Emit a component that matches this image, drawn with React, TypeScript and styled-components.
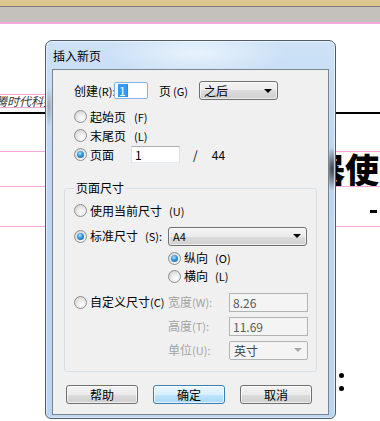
import styled, { createGlobalStyle } from 'styled-components';

const Global = createGlobalStyle`
  html, body { margin: 0; padding: 0; background: #fff; }
  body {
    font-family: "Noto Sans CJK SC", "Liberation Sans", sans-serif;
    font-size: 12px;
    color: #000;
  }
`;

const FONT = `"Noto Sans CJK SC", "Liberation Sans", sans-serif`;

const Screen = styled.div`
  position: relative;
  width: 380px;
  height: 421px;
  overflow: hidden;
  background: #fff;
`;

/* ---------- document behind the dialog ---------- */

const Doc = styled.div`
  display: flex;
  flex-direction: column;
`;

const TopBand = styled.div`
  height: 6px;
  background: #dcc590;
  border-bottom: 1px solid #7d7d7d;
`;

const GrayBand = styled.div`
  height: 15px;
  background: #c4c1bc;
  border-bottom: 2px solid #f4a9d9;
`;

const TextBox = styled.div`
  margin: 70px 0 0 -6px;
  width: 62px;
  height: 12px;
  border: 1px solid #f0a2d2;
  font-size: 12px;
  line-height: 12px;
  font-style: italic;
  color: #3a3a3a;
  white-space: nowrap;
`;

const Rule = styled.div<{ $gap: number }>`
  margin-top: ${({ $gap }) => $gap}px;
  height: 2px;
  background: #000;
`;

const PinkLine = styled.div<{ $gap?: number }>`
  margin-top: ${({ $gap }) => $gap ?? 0}px;
  height: 1px;
  background: #f6a8dc;
`;

const Heading = styled.div`
  height: 34px;
  padding-left: 311px;
  font-size: 34px;
  line-height: 34px;
  font-weight: 900;
  white-space: nowrap;
`;

const DashRow = styled.div`
  height: 39px;
  display: flex;
  align-items: flex-start;
`;

const Dash = styled.span`
  margin: 23px 0 0 370px;
  width: 7px;
  height: 3px;
  background: #000;
`;

const Bullets = styled.div`
  margin: 146px 0 0 339px;
  display: flex;
  flex-direction: column;
  gap: 8px;
`;

const Dot = styled.span`
  width: 5px;
  height: 5px;
  border-radius: 50%;
  background: #000;
`;

/* ---------- dialog ---------- */

const Dialog = styled.div`
  position: absolute;
  left: 45px;
  top: 40px;
  width: 291px;
  height: 379px;
  box-sizing: border-box;
  display: flex;
  flex-direction: column;
  padding: 0 6px 3px;
  border: 1px solid #4f5a66;
  border-radius: 7px 7px 6px 6px;
  background:
    radial-gradient(ellipse 6px 22px at 286px 128px, rgba(25, 25, 25, 0.8), rgba(25, 25, 25, 0)),
    radial-gradient(ellipse 4px 20px at 3px 66px, rgba(70, 70, 70, 0.35), rgba(70, 70, 70, 0)),
    radial-gradient(ellipse 90px 24px at 150px 12px, rgba(235, 244, 253, 0.9), rgba(235, 244, 253, 0)),
    linear-gradient(#cde2f7, #bfd7f1 30%, #bcd5f0);
  box-shadow: inset 0 0 0 1px rgba(255, 255, 255, 0.55);
`;

const TitleBar = styled.div`
  height: 28px;
  display: flex;
  align-items: center;
  padding-left: 1px;
  font-size: 12px;
  color: #000;
`;

const Client = styled.div`
  flex: 1;
  display: flex;
  flex-direction: column;
  padding: 11px 11px 0;
  background: #f0f0f0;
  border: 1px solid #7b8591;
`;

const Row = styled.div<{ $h?: number; $gap?: number; $indent?: number }>`
  display: flex;
  align-items: center;
  height: ${({ $h }) => $h ?? 19}px;
  margin-top: ${({ $gap }) => $gap ?? 0}px;
  padding-left: ${({ $indent }) => $indent ?? 0}px;
  white-space: nowrap;
`;

const Label = styled.span<{ $w?: number; $ml?: number; $muted?: boolean }>`
  flex: none;
  width: ${({ $w }) => ($w ? `${$w}px` : 'auto')};
  margin-left: ${({ $ml }) => $ml ?? 0}px;
  color: ${({ $muted }) => ($muted ? '#a3a3a3' : '#000')};
  line-height: 14px;
`;

const Key = styled.span<{ $ml?: number }>`
  margin-left: ${({ $ml }) => $ml ?? 0}px;
  font-size: 11px;
`;

const Radio = styled.span<{ $checked?: boolean }>`
  flex: none;
  width: 13px;
  height: 13px;
  box-sizing: border-box;
  margin-right: 3px;
  border-radius: 50%;
  border: 1px solid #8e8f8f;
  background: radial-gradient(circle at 62% 68%, #ffffff 0%, #ececec 40%, #cbcbcb 100%);
  display: inline-flex;
  align-items: center;
  justify-content: center;
  &::after {
    content: '';
    display: ${({ $checked }) => ($checked ? 'block' : 'none')};
    width: 7px;
    height: 7px;
    border-radius: 50%;
    background: radial-gradient(circle at 42% 35%, #b8e4ff 0%, #3b9be0 40%, #0c4f8f 100%);
  }
`;

const Field = styled.div<{ $w: number; $h?: number; $focus?: boolean; $disabled?: boolean; $ml?: number }>`
  flex: none;
  width: ${({ $w }) => $w}px;
  height: ${({ $h }) => $h ?? 17}px;
  margin-left: ${({ $ml }) => $ml ?? 0}px;
  box-sizing: border-box;
  display: flex;
  align-items: center;
  padding-left: 3px;
  border: 1px solid;
  border-radius: ${({ $focus }) => ($focus ? '2px' : '0')};
  border-color: ${({ $focus, $disabled }) =>
    $focus ? '#80b5e8' : $disabled ? '#b1b4b7' : '#abadb3 #dbdfe6 #e3e9ef #e2e3ea'};
  background: ${({ $disabled }) => ($disabled ? '#f4f4f4' : '#fff')};
  color: ${({ $disabled }) => ($disabled ? '#5a5a5a' : '#000')};
  font-size: 12px;
`;

const Selected = styled.span`
  background: #3399ff;
  color: #fff;
  padding: 0 1px;
  line-height: 13px;
  border-right: 1px solid #c0641c;
`;

const Combo = styled.div<{ $w: number; $disabled?: boolean; $ml?: number }>`
  flex: none;
  width: ${({ $w }) => $w}px;
  height: 19px;
  margin-left: ${({ $ml }) => $ml ?? 0}px;
  box-sizing: border-box;
  display: flex;
  align-items: center;
  justify-content: space-between;
  padding: 0 5px 0 4px;
  border: 1px solid ${({ $disabled }) => ($disabled ? '#b1b4b7' : '#707070')};
  border-radius: ${({ $disabled }) => ($disabled ? '2px' : '3px')};
  background: ${({ $disabled }) =>
    $disabled ? '#f4f4f4' : 'linear-gradient(#f3f3f3 0%, #ebebeb 50%, #dddddd 50%, #cfcfcf 100%)'};
  box-shadow: ${({ $disabled }) => ($disabled ? 'none' : 'inset 0 0 0 1px rgba(255,255,255,0.6)')};
  color: ${({ $disabled }) => ($disabled ? '#444' : '#000')};
`;

const Arrow = styled.span<{ $disabled?: boolean }>`
  width: 0;
  height: 0;
  border-left: 4px solid transparent;
  border-right: 4px solid transparent;
  border-top: 4px solid ${({ $disabled }) => ($disabled ? '#a8a8a8' : '#000')};
`;

const Group = styled.fieldset`
  margin: 17px 0 0;
  padding: 0 0 11px 9px;
  border: 1px solid #d5dfe5;
  border-radius: 3px;
  min-width: 0;
`;

const Legend = styled.legend`
  margin-left: 0;
  padding: 0 2px;
  font-size: 12px;
  line-height: 14px;
`;

const CustomGrid = styled.div`
  margin-top: 7px;
  display: grid;
  grid-template-columns: 94px 61px 79px;
  grid-auto-rows: 20px;
  row-gap: 4px;
  align-items: center;
  white-space: nowrap;
`;

const Cell = styled.div`
  display: flex;
  align-items: center;
`;

const Buttons = styled.div`
  margin: 13px 0 0 2px;
  display: flex;
  gap: 15px;
`;

const Btn = styled.button<{ $primary?: boolean }>`
  width: 72px;
  height: 19px;
  padding: 0;
  font-family: ${FONT};
  font-size: 12px;
  line-height: 15px;
  color: #000;
  border: 1px solid ${({ $primary }) => ($primary ? '#3c7fb1' : '#707070')};
  border-radius: 3px;
  background: ${({ $primary }) =>
    $primary
      ? 'linear-gradient(#eaf6fd 0%, #d9f0fc 50%, #bee6fd 50%, #a7d9f5 100%)'
      : 'linear-gradient(#f3f3f3 0%, #ebebeb 50%, #dddddd 50%, #cfcfcf 100%)'};
  box-shadow: inset 0 0 0 1px rgba(255, 255, 255, 0.65);
`;

export default function App() {
  return (
    <Screen>
      <Global />
      <Doc>
        <TopBand />
        <GrayBand />
        <TextBox>腾时代科技</TextBox>
        <Rule $gap={4} />
        <PinkLine $gap={37} />
        <Heading>器使</Heading>
        <PinkLine />
        <DashRow>
          <Dash />
        </DashRow>
        <PinkLine />
        <Bullets>
          <Dot />
          <Dot />
        </Bullets>
      </Doc>

      <Dialog>
        <TitleBar>插入新页</TitleBar>
        <Client>
          <Row $indent={10}>
            <Label $w={40}>
              创建<Key>(R):</Key>
            </Label>
            <Field $w={34} $focus>
              <Selected>1</Selected>
            </Field>
            <Label $w={40} $ml={11}>
              页<Key $ml={2}>(G)</Key>
            </Label>
            <Combo $w={79}>
              之后
              <Arrow />
            </Combo>
          </Row>

          <Row $indent={10} $gap={7}>
            <Radio />
            <Label>
              起始页<Key $ml={8}>(F)</Key>
            </Label>
          </Row>
          <Row $indent={10}>
            <Radio />
            <Label>
              末尾页<Key $ml={8}>(L)</Key>
            </Label>
          </Row>
          <Row $indent={10}>
            <Radio $checked />
            <Label>页面</Label>
            <Field $w={49} $ml={17}>
              1
            </Field>
            <Label $ml={13}>/</Label>
            <Label $ml={14}>44</Label>
          </Row>

          <Group>
            <Legend>页面尺寸</Legend>
            <Row $gap={6}>
              <Radio />
              <Label>
                使用当前尺寸<Key $ml={7}>(U)</Key>
              </Label>
            </Row>
            <Row $gap={6} $h={20}>
              <Radio $checked />
              <Label $w={78}>
                标准尺寸<Key $ml={7}>(S):</Key>
              </Label>
              <Combo $w={139}>
                <Key>A4</Key>
                <Arrow />
              </Combo>
            </Row>
            <Row $gap={3} $h={18} $indent={94}>
              <Radio $checked />
              <Label>
                纵向<Key $ml={7}>(O)</Key>
              </Label>
            </Row>
            <Row $h={18} $indent={94}>
              <Radio />
              <Label>
                横向<Key $ml={7}>(L)</Key>
              </Label>
            </Row>

            <CustomGrid>
              <Cell>
                <Radio />
                <Label>
                  自定义尺寸<Key>(C)</Key>
                </Label>
              </Cell>
              <Label $muted>
                宽度<Key>(W):</Key>
              </Label>
              <Field $w={79} $h={19} $disabled>
                8.26
              </Field>

              <span />
              <Label $muted>
                高度<Key>(T):</Key>
              </Label>
              <Field $w={79} $h={19} $disabled>
                11.69
              </Field>

              <span />
              <Label $muted>
                单位<Key>(U):</Key>
              </Label>
              <Combo $w={79} $disabled>
                英寸
                <Arrow $disabled />
              </Combo>
            </CustomGrid>
          </Group>

          <Buttons>
            <Btn>帮助</Btn>
            <Btn $primary>确定</Btn>
            <Btn>取消</Btn>
          </Buttons>
        </Client>
      </Dialog>
    </Screen>
  );
}
